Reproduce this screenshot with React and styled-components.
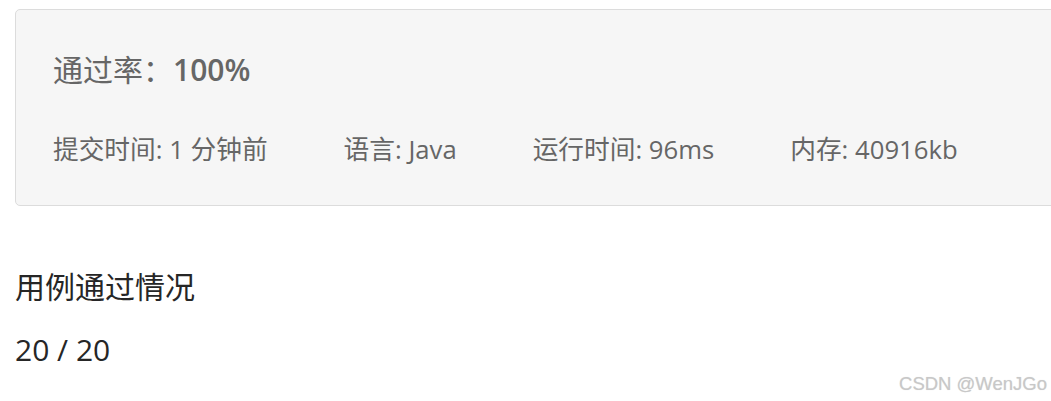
import React from "react";
import styled, { createGlobalStyle } from "styled-components";

const Global = createGlobalStyle`
  html, body { margin: 0; padding: 0; background: #fff; overflow: hidden; }
  body { font-family: "Open Sans", "Noto Sans CJK SC", sans-serif; }
`;

const Page = styled.div`
  position: relative;
  width: 1051px;
  height: 401px;
  padding: 9px 0 0 15px;
  box-sizing: border-box;
  overflow: hidden;
`;

const Card = styled.div`
  width: 1080px;
  box-sizing: border-box;
  background: #f6f6f6;
  border: 1px solid #dcdcdc;
  border-radius: 5px;
  padding: 40px 0 35px 37px;
  color: #666;
`;

const Rate = styled.div`
  font-size: 30px;
  line-height: 40px;
  margin-bottom: 40px;
  b { font-weight: 600; }
`;

const Meta = styled.div`
  display: flex;
  gap: 76px;
  font-size: 25.7px;
  line-height: 40px;
`;

const Heading = styled.div`
  margin-top: 61px;
  font-size: 30px;
  line-height: 40px;
  color: #262626;
`;

const Count = styled.div`
  margin-top: 23px;
  font-size: 30px;
  line-height: 40px;
  color: #262626;
`;

const Watermark = styled.div`
  position: absolute;
  right: 4px;
  bottom: 6px;
  font-family: "Liberation Sans", Arial, sans-serif;
  font-size: 18.5px;
  color: #c8c8c8;
  text-shadow: 0 0 1px #ddd;
`;

export default function App() {
  return (
    <Page>
      <Global />
      <Card>
        <Rate>
          通过率：<b>100%</b>
        </Rate>
        <Meta>
          <span>提交时间: 1 分钟前</span>
          <span>语言: Java</span>
          <span>运行时间: 96ms</span>
          <span>内存: 40916kb</span>
        </Meta>
      </Card>
      <Heading>用例通过情况</Heading>
      <Count>20 / 20</Count>
      <Watermark>CSDN @WenJGo</Watermark>
    </Page>
  );
}
